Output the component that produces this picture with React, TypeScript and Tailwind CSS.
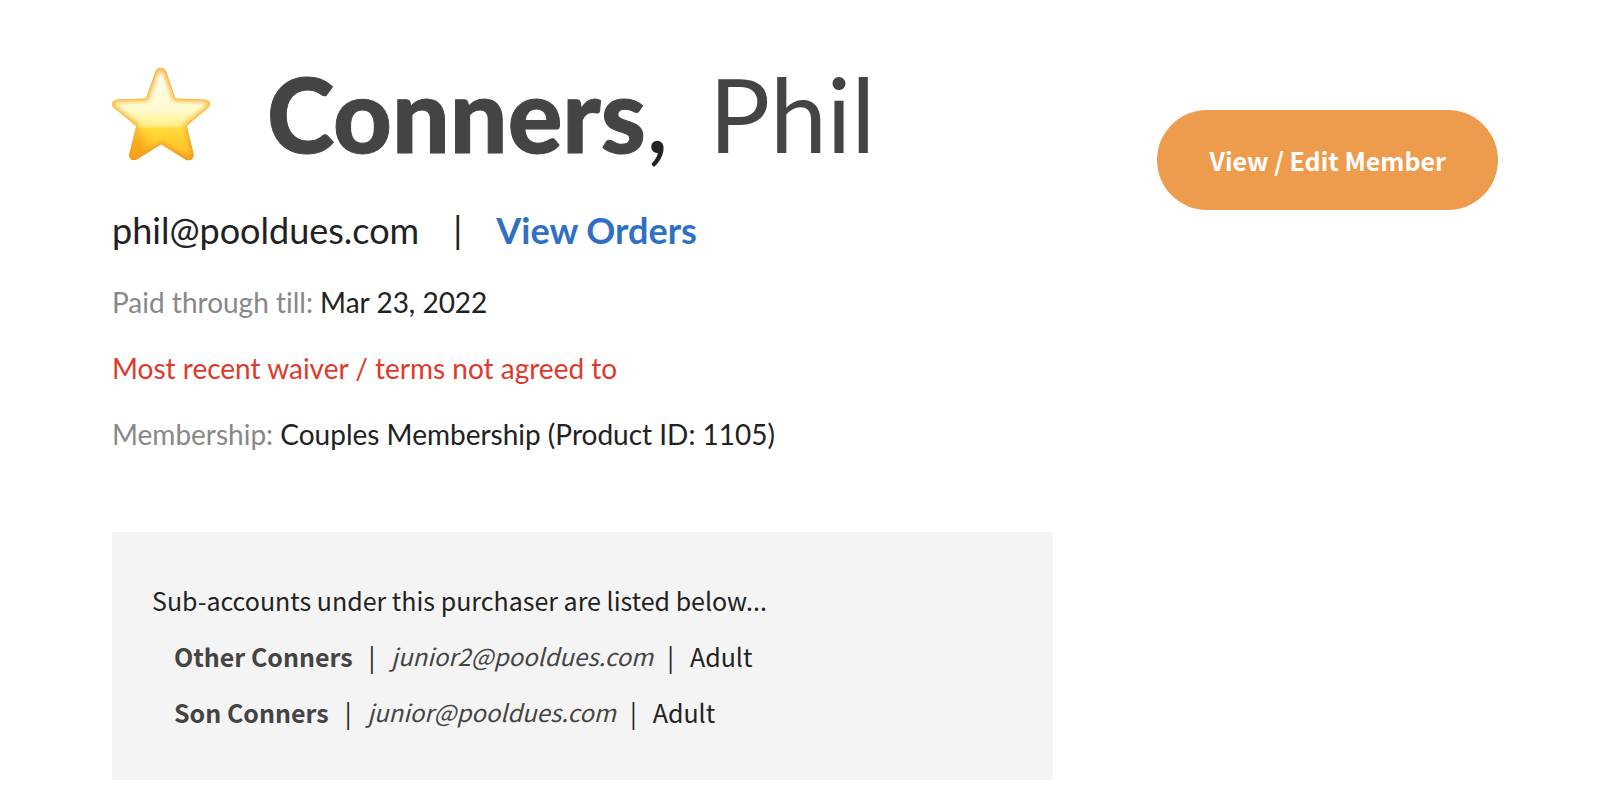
const STAR =
  "M165 47C169 32 192 32 197 47L225 128L312 131C330 132 336 146 323 157L259 210L279 294C282 310 267 320 254 311L182 266L109 311C96 319 82 309 87 293L107 211L40 157C28 146 35 132 51 131L136 128Z";

function Star() {
  return (
    <svg viewBox="34 34 298 282" className="h-[94px] w-[99px] shrink-0" role="img" aria-label="Starred">
      <defs>
        <linearGradient id="body" x1="0" y1="0" x2="0" y2="1">
          <stop offset="0" stopColor="#fffdf0" />
          <stop offset="0.45" stopColor="#fffbd0" />
          <stop offset="0.62" stopColor="#fff08a" />
          <stop offset="0.66" stopColor="#ffd93a" />
          <stop offset="0.82" stopColor="#ffcd2c" />
          <stop offset="1" stopColor="#fbb52a" />
        </linearGradient>
        <linearGradient id="edge" x1="0" y1="0" x2="0" y2="1">
          <stop offset="0" stopColor="#f9b243" />
          <stop offset="0.5" stopColor="#fac04c" />
          <stop offset="1" stopColor="#f39a17" />
        </linearGradient>
        <filter id="soft" x="-20%" y="-20%" width="140%" height="140%">
          <feGaussianBlur stdDeviation="6" />
        </filter>
        <filter id="glow" x="-50%" y="-50%" width="200%" height="200%">
          <feGaussianBlur stdDeviation="14" />
        </filter>
        <clipPath id="outline">
          <path d={STAR} />
        </clipPath>
      </defs>
      <g clipPath="url(#outline)">
        <path d={STAR} fill="url(#body)" />
        <ellipse cx="112" cy="278" rx="26" ry="44" fill="#f58f0c" opacity="0.6" filter="url(#glow)" />
        <path d={STAR} fill="none" stroke="url(#edge)" strokeWidth="18" filter="url(#soft)" />
        <path d={STAR} fill="none" stroke="url(#edge)" strokeWidth="5" />
      </g>
    </svg>
  );
}

const accounts = [
  { name: "Other Conners", email: "junior2@pooldues.com", type: "Adult" },
  { name: "Son Conners", email: "junior@pooldues.com", type: "Adult" },
];

export default function App() {
  return (
    <main className="flex min-h-screen items-start gap-[104px] bg-white pt-[52px] pr-[122px] pb-3 pl-28 font-['Lato',sans-serif] text-[#222222] [font-variant-ligatures:no-common-ligatures]">
      <div className="flex min-w-0 flex-1 flex-col gap-8">
        <header className="flex items-center gap-14">
          <Star />
          <h1 className="text-[102px] leading-[124px] whitespace-nowrap">
            <span className="font-black text-[#444444] [-webkit-text-stroke:1px_#444444]">Conners</span>
            <span className="mr-10">,</span>
            <span className="text-[#444444]">Phil</span>
          </h1>
        </header>
        <div className="flex gap-[34px] text-4xl leading-[45px]">
          <span>phil@pooldues.com</span>
          <span>|</span>
          <a href="#orders" className="font-bold text-[#2f70c4]">View Orders</a>
        </div>
        <p className="text-[28px] leading-[34px]">
          <span className="text-[#888888]">Paid through till:</span> Mar 23, 2022
        </p>
        <p className="text-[28px] leading-[34px] text-[#e0392b]">Most recent waiver / terms not agreed to</p>
        <p className="text-[28px] leading-[34px]">
          <span className="text-[#888888]">Membership:</span> Couples Membership (Product ID: 1105)
        </p>
        <section className="mt-[49px] bg-[#f4f4f4] p-10 font-['Noto_Sans_CJK_SC',sans-serif] text-[25px] leading-[56px]">
          <p>Sub-accounts under this purchaser are listed below...</p>
          <ul className="pl-[22px]">
            {accounts.map((a) => (
              <li key={a.email} className="flex">
                <span className="font-bold text-[#444444]">{a.name}</span>
                <span className="mx-4">|</span>
                <em className="text-2xl leading-[56px] text-[#444444]">{a.email}</em>
                <span className="mr-4 ml-[14px]">|</span>
                <span>{a.type}</span>
              </li>
            ))}
          </ul>
        </section>
      </div>
      <button
        type="button"
        className="mt-[58px] shrink-0 rounded-full bg-[#ed9c4e] px-[52px] py-8 font-['Noto_Sans_CJK_SC',sans-serif] text-[25px] leading-9 font-bold text-white"
      >
        View / Edit Member
      </button>
    </main>
  );
}
